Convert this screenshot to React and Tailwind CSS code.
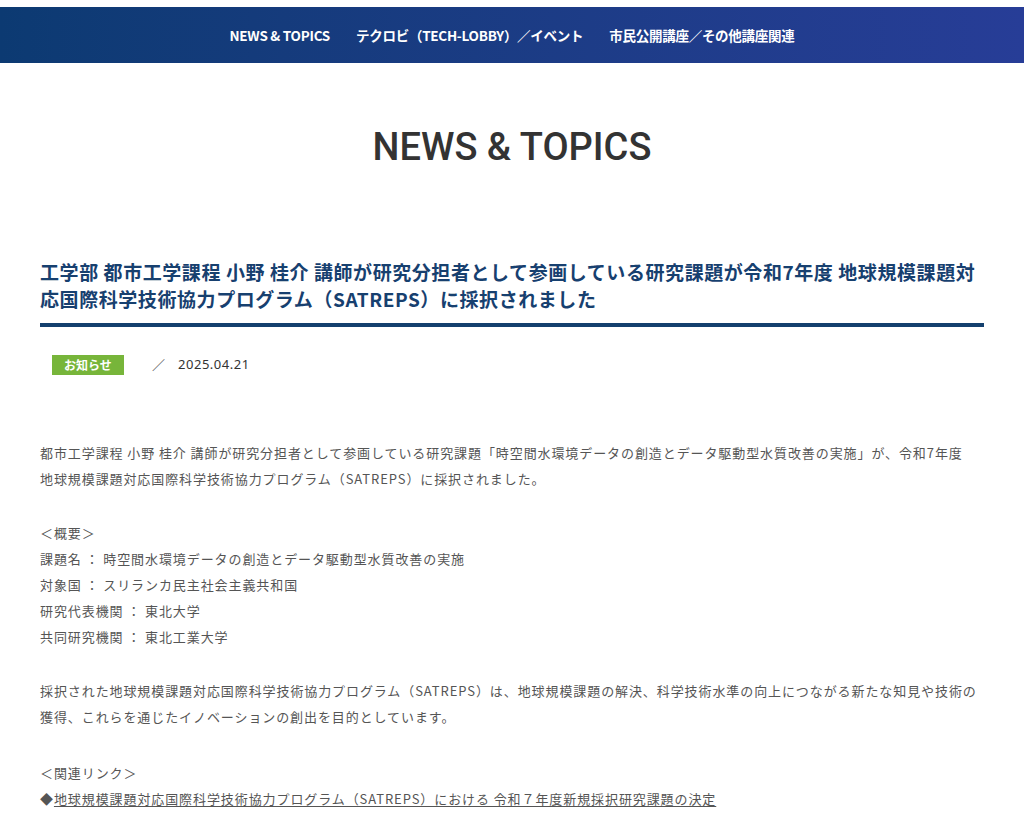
import React from 'react';

const navItems = ['NEWS & TOPICS', 'テクロビ（TECH-LOBBY）／イベント', '市民公開講座／その他講座関連'];

const overview = [
    ['課題名', '時空間水環境データの創造とデータ駆動型水質改善の実施'],
    ['対象国', 'スリランカ民主社会主義共和国'],
    ['研究代表機関', '東北大学'],
    ['共同研究機関', '東北工業大学'],
];

const App = () => {
    return (
        <div className="min-h-screen bg-white font-['Noto_Sans_CJK_JP','Noto_Sans',sans-serif]">
            {/* Global nav */}
            <div className="pt-[7px]">
                <nav className="h-[56px] bg-gradient-to-r from-[#0c3a72] to-[#273d97] flex items-center justify-center gap-[26px]">
                    {navItems.map(item => (
                        <a key={item} className="text-white text-[13.5px] font-bold tracking-[-0.02em] cursor-pointer">
                            {item}
                        </a>
                    ))}
                </nav>
            </div>

            {/* Page heading */}
            <h1 className="mt-[60px] text-center text-[38px] leading-[48px] font-medium text-[#333] font-['Roboto','Noto_Sans',sans-serif]">
                NEWS &amp; TOPICS
            </h1>

            <main className="mx-[40px] mt-[87px]">
                {/* Article title */}
                <h2 className="text-[19px] leading-[27px] font-bold tracking-[0.03em] text-[#17406f] pb-[11px] border-b-[4px] border-[#14406e]">
                    工学部 都市工学課程 小野 桂介 講師が研究分担者として参画している研究課題が令和7年度 地球規模課題対応国際科学技術協力プログラム（SATREPS）に採択されました
                </h2>

                {/* Meta */}
                <div className="mt-[28px] flex items-center pl-[12px]">
                    <span className="bg-[#77b53a] text-white text-[12px] font-bold leading-[20px] w-[72px] text-center">
                        お知らせ
                    </span>
                    <span className="ml-[28px] text-[13px] text-[#555]">／</span>
                    <span className="ml-[13px] text-[13px] tracking-[0.04em] text-[#333] font-['Noto_Sans',sans-serif]">2025.04.21</span>
                </div>

                {/* Body */}
                <div className="mt-[65px] text-[13px] leading-[26px] tracking-[0.07em] text-[#555]">
                    <p>
                        都市工学課程 小野 桂介 講師が研究分担者として参画している研究課題「時空間水環境データの創造とデータ駆動型水質改善の実施」が、令和7年度<br />
                        地球規模課題対応国際科学技術協力プログラム（SATREPS）に採択されました。
                    </p>

                    <p className="mt-[28px]">＜概要＞</p>
                    {overview.map(([label, value]) => (
                        <p key={label}>{label} ： {value}</p>
                    ))}

                    <p className="mt-[28px]">
                        採択された地球規模課題対応国際科学技術協力プログラム（SATREPS）は、地球規模課題の解決、科学技術水準の向上につながる新たな知見や技術の獲得、これらを通じたイノベーションの創出を目的としています。
                    </p>

                    <p className="mt-[30px]">＜関連リンク＞</p>
                    <p>
                        ◆<a className="underline underline-offset-2 cursor-pointer">地球規模課題対応国際科学技術協力プログラム（SATREPS）における 令和７年度新規採択研究課題の決定</a>
                    </p>
                </div>
            </main>
        </div>
    );
};

export default App;
